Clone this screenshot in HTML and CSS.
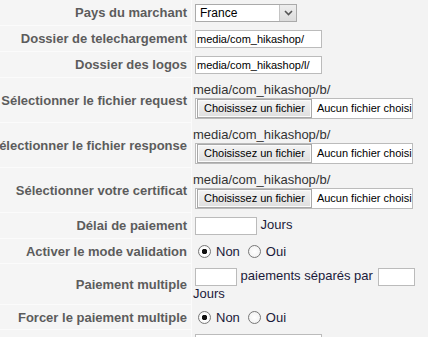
FILE: index.html
```html
<!DOCTYPE html>
<html>

<head>
  <title>Paramètres du paiement</title>
  <link rel="stylesheet" href="styles.css">
</head>

<body>
  <div class="admintable">
    <div class="row">
      <div class="key"><label>Pays du marchant</label></div>
      <div class="value">
        <div class="dropdown">
          <span class="current">France</span>
          <span class="arrow">
            <svg width="9" height="6" viewBox="0 0 9 6"><path d="M1 1 L4.5 4.5 L8 1" fill="none" stroke="#555" stroke-width="1.6"/></svg>
          </span>
        </div>
      </div>
    </div>
    <div class="row">
      <div class="key"><label>Dossier de telechargement</label></div>
      <div class="value"><input type="text" class="inputbox" value="media/com_hikashop/"></div>
    </div>
    <div class="row">
      <div class="key"><label>Dossier des logos</label></div>
      <div class="value"><input type="text" class="inputbox" value="media/com_hikashop/l/"></div>
    </div>
    <div class="row">
      <div class="key"><label>Sélectionner le fichier request</label></div>
      <div class="value">
        <div class="path">media/com_hikashop/b/</div>
        <div class="filebox"><span class="filebtn">Choisissez un fichier</span><span class="filename">Aucun fichier choisi</span></div>
      </div>
    </div>
    <div class="row">
      <div class="key"><label>Sélectionner le fichier response</label></div>
      <div class="value">
        <div class="path">media/com_hikashop/b/</div>
        <div class="filebox"><span class="filebtn">Choisissez un fichier</span><span class="filename">Aucun fichier choisi</span></div>
      </div>
    </div>
    <div class="row">
      <div class="key"><label>Sélectionner votre certificat</label></div>
      <div class="value">
        <div class="path">media/com_hikashop/b/</div>
        <div class="filebox"><span class="filebtn">Choisissez un fichier</span><span class="filename">Aucun fichier choisi</span></div>
      </div>
    </div>
    <div class="row">
      <div class="key"><label>Délai de paiement</label></div>
      <div class="value"><input type="text" class="inputbox delay"> Jours</div>
    </div>
    <div class="row">
      <div class="key"><label>Activer le mode validation</label></div>
      <div class="value radios">
        <input type="radio" name="validation" checked> <span>Non</span>
        <input type="radio" name="validation"> <span>Oui</span>
      </div>
    </div>
    <div class="row">
      <div class="key"><label>Paiement multiple</label></div>
      <div class="value"><input type="text" class="inputbox times"> paiements séparés par <input type="text" class="inputbox every"> Jours</div>
    </div>
    <div class="row">
      <div class="key"><label>Forcer le paiement multiple</label></div>
      <div class="value radios">
        <input type="radio" name="force" checked> <span>Non</span>
        <input type="radio" name="force"> <span>Oui</span>
      </div>
    </div>
    <div class="row">
      <div class="key"><label>Template</label></div>
      <div class="value"><input type="text" class="inputbox"></div>
    </div>
  </div>
</body>

</html>
```

FILE: styles.css
```css
body {
  margin: 0;
  background-color: #f3f3f3;
  font-family: "Liberation Sans", Arial, sans-serif;
  font-size: 13px;
  color: #1a1a3a;
}

.admintable .row {
  display: grid;
  grid-template-columns: 192px 1fr;
}

.admintable .key {
  display: flex;
  align-items: center;
  justify-content: flex-end;
  overflow: hidden;
  white-space: nowrap;
  padding-right: 4px;
  background-color: #f5f5f5;
  border-right: 1px solid #fbfbfb;
  border-bottom: 1px solid #fbfbfb;
  box-sizing: border-box;
  font-weight: bold;
  color: #5c5c5c;
}

.admintable .value {
  padding: 4px 4px 4px 1px;
  line-height: 15px;
  white-space: normal;
}

.inputbox {
  box-sizing: border-box;
  width: 127px;
  height: 18px;
  margin: 0 0 0 2px;
  padding: 0 1px;
  border: 1px solid #bbb;
  background: #fff;
  font-family: "Liberation Sans", Arial, sans-serif;
  font-size: 11px;
  color: #000;
  vertical-align: middle;
  outline: none;
}

.inputbox.delay {
  width: 62px;
}

.inputbox.times {
  width: 42px;
}

.inputbox.every {
  width: 37px;
}

.dropdown {
  display: flex;
  box-sizing: border-box;
  width: 102px;
  height: 18px;
  margin-left: 2px;
  border: 1px solid #aaa;
  background: #fff;
  font-size: 12px;
  color: #000;
}

.dropdown .current {
  flex: 1;
  padding-left: 4px;
  line-height: 16px;
}

.dropdown .arrow {
  display: flex;
  align-items: center;
  justify-content: center;
  width: 16px;
  background: linear-gradient(#eee, #dcdcdc);
  border-left: 1px solid #c4c4c4;
}

.path {
  color: #333;
  height: 16px;
}

.filebox {
  display: flex;
  align-items: center;
  box-sizing: border-box;
  width: 218px;
  height: 21px;
  margin-left: 2px;
  border: 1px solid #bbb;
  background: #fff;
  overflow: hidden;
  white-space: nowrap;
  font-size: 11px;
  color: #000;
}

.filebtn {
  box-sizing: border-box;
  height: 19px;
  margin-left: 1px;
  padding: 0 6px;
  line-height: 17px;
  border: 1px solid #a8a8a8;
  background: linear-gradient(#f4f4f4, #dedede);
  box-shadow: inset 0 0 0 1px #fbfbfb;
}

.filename {
  margin-left: 5px;
}

.radios {
  display: flex;
  align-items: center;
  height: 17px;
}

.radios input {
  appearance: none;
  box-sizing: border-box;
  width: 13px;
  height: 13px;
  margin: 0 5px 0 5px;
  border: 1px solid #777;
  border-radius: 50%;
  background: radial-gradient(#fff, #eee);
}

.radios input:checked {
  background: radial-gradient(circle, #111 0 2.5px, #fff 3px, #eee);
}

.radios span {
  margin-right: 3px;
}
```
